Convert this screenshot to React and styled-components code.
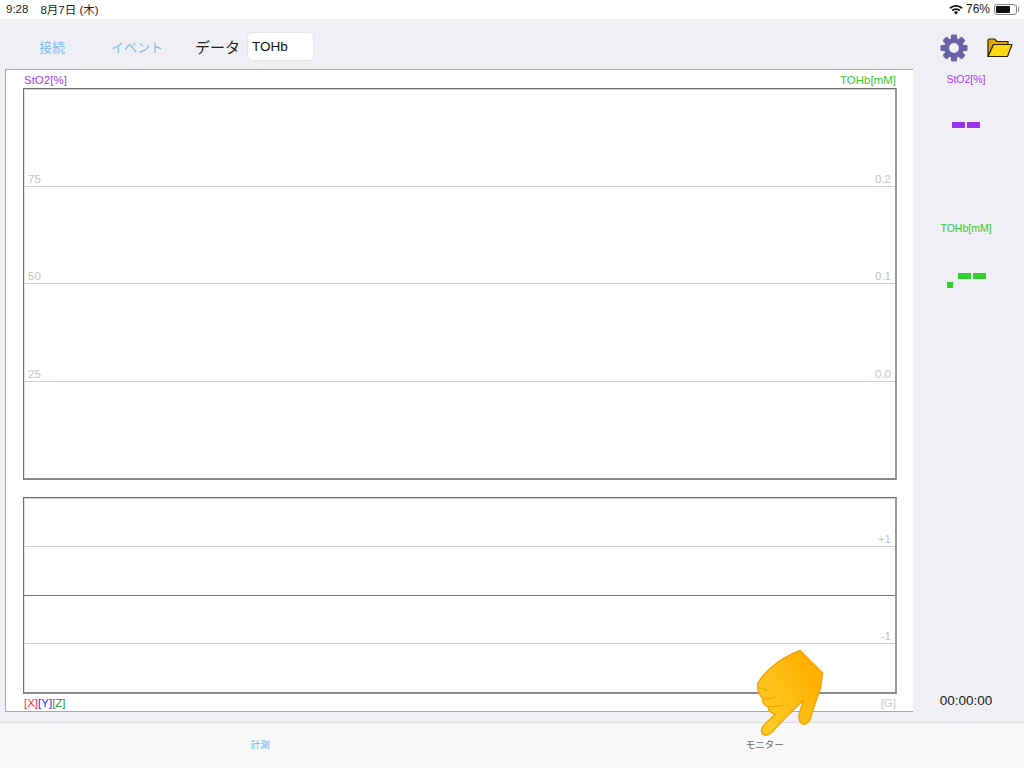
import React from 'react';
import styled, { createGlobalStyle } from 'styled-components';

const Global = createGlobalStyle`
  html, body {
    margin: 0;
    padding: 0;
    background: #efeff4;
  }
  * {
    box-sizing: border-box;
  }
`;

const Root = styled.div`
  position: relative;
  width: 1024px;
  height: 768px;
  overflow: hidden;
  display: flex;
  flex-direction: column;
  background: #efeff4;
  font-family: 'Liberation Sans', 'Noto Sans CJK JP', sans-serif;
`;

const StatusBar = styled.div`
  height: 19px;
  flex: none;
  background: #fff;
  display: flex;
  align-items: center;
  justify-content: space-between;
  padding: 0 7px 1px 6px;
  font-size: 11.5px;
  color: #222;
`;

const StatusGroup = styled.div`
  display: flex;
  align-items: center;
  gap: ${p => p.gap || 4}px;
  font-size: ${p => p.size || 11.5}px;
`;

const Battery = styled.div`
  width: 23px;
  height: 11px;
  margin-left: 1px;
  padding: 1px;
  border: 1px solid #888;
  border-radius: 3px;
  position: relative;
  &::before {
    content: '';
    display: block;
    width: 76%;
    height: 100%;
    background: #111;
    border-radius: 1px;
  }
  &::after {
    content: '';
    position: absolute;
    right: -3px;
    top: 2px;
    width: 1px;
    height: 5px;
    background: #888;
  }
`;

const Main = styled.div`
  flex: 1;
  min-height: 0;
  display: flex;
`;

const LeftColumn = styled.div`
  width: 913px;
  flex: none;
  display: flex;
  flex-direction: column;
  padding: 0 0 10px 5px;
`;

const Toolbar = styled.div`
  height: 50px;
  flex: none;
  display: flex;
  align-items: center;
  padding-top: 4px;
`;

const ToolButton = styled.div`
  width: ${p => p.w}px;
  margin-left: ${p => p.ml}px;
  color: #7db8f7;
  font-size: 13px;
  text-align: center;
`;

const DataLabel = styled.div`
  margin-left: 28px;
  font-size: 15px;
  color: #222;
`;

const DataField = styled.div`
  width: 67px;
  height: 29px;
  margin-left: 7px;
  padding-left: 4px;
  display: flex;
  align-items: center;
  background: #fff;
  border: 1px solid #e6e6ea;
  border-radius: 5px;
  font-size: 13.5px;
  color: #111;
`;

const Panel = styled.div`
  flex: 1;
  min-height: 0;
  background: #fff;
  border: 1px solid #a8a8a8;
  border-right: none;
  padding: 0 16px 0 17px;
  display: flex;
  flex-direction: column;
`;

const LegendRow = styled.div`
  height: 18px;
  flex: none;
  display: flex;
  justify-content: space-between;
  align-items: center;
  font-size: 11.5px;
  padding: 2px 1px 0 1px;
`;

const Tint = styled.span`
  color: ${p => p.color};
`;

const Chart = styled.div`
  height: ${p => p.h}px;
  flex: none;
  border-style: solid;
  border-width: 1px 2px 2px 1px;
  border-color: #6e6e6e #999 #8a8a8a #6e6e6e;
  box-shadow: inset 0 1px #d4d4d4, inset 1px 0 #e2e2e2;
  display: flex;
  flex-direction: column;
`;

const ChartRow = styled.div`
  flex: 1;
  display: flex;
  justify-content: space-between;
  align-items: flex-end;
  padding: 0 4px 1px 4px;
  font-size: 11.5px;
  color: #c4c4c4;
  border-bottom: ${p =>
    p.last ? 'none' : `1px solid ${p.dark ? '#707070' : '#cfcfcf'}`};
`;

const FootRow = styled(LegendRow)`
  height: 17px;
  padding-top: 0;
`;

const GLabel = styled.span`
  color: #c8c8c8;
`;

const ChartGap = styled.div`
  height: 17px;
  flex: none;
`;

const Sidebar = styled.div`
  flex: 1;
  display: flex;
  flex-direction: column;
  align-items: center;
  padding: 0 5px 14px 0;
`;

const IconRow = styled.div`
  height: 50px;
  width: 100%;
  flex: none;
  display: flex;
  align-items: center;
  padding: 7px 0 0 27px;
  gap: 19px;
`;

const SideLabel = styled.div`
  font-size: 10.5px;
  margin-top: ${p => p.mt}px;
  color: ${p => p.color};
`;

const Dashes = styled.div`
  display: flex;
  align-items: flex-start;
  gap: 2px;
  margin-top: ${p => p.mt}px;
`;

const Dash = styled.div`
  width: 13px;
  height: 6px;
  background: ${p => p.color};
`;

const Dot = styled.div`
  width: 6px;
  height: 6px;
  margin: 9px 3px 0 0;
  background: ${p => p.color};
`;

const Timer = styled.div`
  margin-top: auto;
  font-size: 13.5px;
  color: #222;
`;

const TabBar = styled.div`
  height: 46px;
  flex: none;
  display: flex;
  padding: 0 7px 0 8px;
  background: #f8f8f8;
  border-top: 1px solid #dcdce0;
`;

const Tab = styled.div`
  flex: 1;
  padding: 14px 0 0;
  text-align: center;
  font-size: 9.5px;
  color: ${p => (p.active ? '#6aaef5' : '#666')};
`;

const Hand = styled.svg`
  position: absolute;
  left: 750px;
  top: 645px;
`;

const purple = '#9a35ef';
const green = '#2fd02f';

function WifiIcon() {
  return (
    <svg width="14" height="11" viewBox="0 0 14 11">
      <path d="M0.3 3.6 A9.6 9.6 0 0 1 13.7 3.6 L12.4 5 A7.7 7.7 0 0 0 1.6 5 Z" fill="#111" />
      <path d="M2.6 6 A6.4 6.4 0 0 1 11.4 6 L10.1 7.3 A4.6 4.6 0 0 0 3.9 7.3 Z" fill="#111" />
      <path d="M4.9 8.3 A3.1 3.1 0 0 1 9.1 8.3 L7 10.6 Z" fill="#111" />
    </svg>
  );
}

function GearIcon() {
  const teeth = [0, 45, 90, 135, 180, 225, 270, 315];
  return (
    <svg width="28" height="28" viewBox="0 0 28 28">
      <g fill="#6b63a8">
        {teeth.map(a => (
          <rect key={a} x="11" y="0.5" width="6" height="7" rx="1.2" transform={`rotate(${a} 14 14)`} />
        ))}
      </g>
      <circle cx="14" cy="14" r="7.4" fill="none" stroke="#6b63a8" strokeWidth="5" />
    </svg>
  );
}

function FolderIcon() {
  return (
    <svg width="26" height="20" viewBox="0 0 26 20">
      <path d="M1 18.5 V2.5 Q1 1 2.5 1 H7.5 L10 3.5 H21 V6.5 H6.5 Z" fill="#e0a800" stroke="#2a2200" strokeWidth="1.2" strokeLinejoin="round" />
      <path d="M6.5 6.5 H25 L20.5 18.5 H1 Z" fill="#ffd70f" stroke="#2a2200" strokeWidth="1.2" strokeLinejoin="round" />
    </svg>
  );
}

function PointingHand() {
  return (
    <Hand width="80" height="95" viewBox="0 0 80 95">
      <defs>
        <linearGradient id="handFill" x1="0.1" y1="0.75" x2="0.8" y2="0.2">
          <stop offset="0" stopColor="#ffcb25" />
          <stop offset="1" stopColor="#ffb000" />
        </linearGradient>
      </defs>
      <path
        d="M50 5.5 L72.5 28 L70.500 43 L62.500 66 L60 75 Q55 81.500 51 78 Q48 75 49.500 68 L53.500 55 L36 72 L21.500 87.500 Q16 92.500 12.500 88.500 Q10 84.500 14 80 L25.500 69 Q18.500 68 18 61.500 Q12 59.500 12.500 53 Q6.500 47 8 38 Q13 30 20 23.500 Q33 12 50 5.500 Z"
        fill="url(#handFill)"
        stroke="#f0a606"
        strokeWidth="1.5"
        strokeLinejoin="round"
      />
      <path
        d="M8.500 43 Q13 42.500 16.500 45.500 M12.500 53 Q17 55 25 52 M18 61.500 Q23 62 33 60"
        fill="none"
        stroke="#f0a606"
        strokeWidth="1.1"
        strokeLinecap="round"
      />
    </Hand>
  );
}

export default function App() {
  return (
    <Root>
      <Global />
      <StatusBar>
        <StatusGroup gap={12}>
          <span>9:28</span>
          <span>8月7日 (木)</span>
        </StatusGroup>
        <StatusGroup size={12} gap={3}>
          <WifiIcon />
          <span>76%</span>
          <Battery />
        </StatusGroup>
      </StatusBar>
      <Main>
        <LeftColumn>
          <Toolbar>
            <ToolButton w={40} ml={27}>接続</ToolButton>
            <ToolButton w={60} ml={35}>イベント</ToolButton>
            <DataLabel>データ</DataLabel>
            <DataField>TOHb</DataField>
          </Toolbar>
          <Panel>
            <LegendRow>
              <Tint color="#a23ff5">StO2[%]</Tint>
              <Tint color="#35cc35">TOHb[mM]</Tint>
            </LegendRow>
            <Chart h={392}>
              <ChartRow>
                <span>75</span>
                <span>0.2</span>
              </ChartRow>
              <ChartRow>
                <span>50</span>
                <span>0.1</span>
              </ChartRow>
              <ChartRow>
                <span>25</span>
                <span>0.0</span>
              </ChartRow>
              <ChartRow last />
            </Chart>
            <ChartGap />
            <Chart h={197}>
              <ChartRow>
                <span />
                <span>+1</span>
              </ChartRow>
              <ChartRow dark />
              <ChartRow>
                <span />
                <span>-1</span>
              </ChartRow>
              <ChartRow last />
            </Chart>
            <FootRow>
              <span>
                <Tint color="#f33">[X]</Tint>
                <Tint color="#33f">[Y]</Tint>
                <Tint color="#2a9a2a">[Z]</Tint>
              </span>
              <GLabel>[G]</GLabel>
            </FootRow>
          </Panel>
        </LeftColumn>
        <Sidebar>
          <IconRow>
            <GearIcon />
            <FolderIcon />
          </IconRow>
          <SideLabel color="#a23ff5" mt={4}>StO2[%]</SideLabel>
          <Dashes mt={37}>
            <Dash color={purple} />
            <Dash color={purple} />
          </Dashes>
          <SideLabel color="#35cc35" mt={94}>TOHb[mM]</SideLabel>
          <Dashes mt={39}>
            <Dot color={green} />
            <Dash color={green} />
            <Dash color={green} />
          </Dashes>
          <Timer>00:00:00</Timer>
        </Sidebar>
      </Main>
      <TabBar>
        <Tab active>計測</Tab>
        <Tab>モニター</Tab>
      </TabBar>
      <PointingHand />
    </Root>
  );
}
